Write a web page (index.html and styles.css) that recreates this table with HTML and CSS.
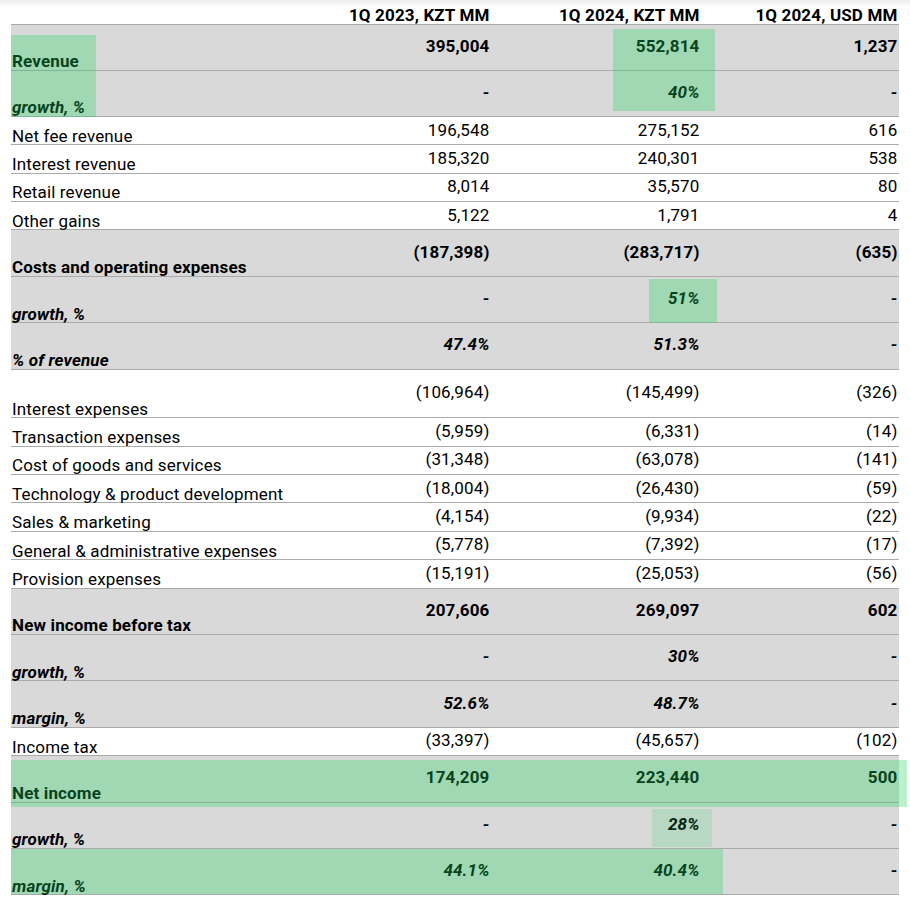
FILE: index.html
```html
<!DOCTYPE html>
<html lang="en">
<head>
<meta charset="utf-8">
<title>1Q 2024 results</title>
<link rel="stylesheet" href="styles.css">
</head>
<body>
<div class="sheet">
  <div class="row head">
    <div class="lab"></div>
    <div class="num">1Q 2023, KZT MM</div>
    <div class="num">1Q 2024, KZT MM</div>
    <div class="num">1Q 2024, USD MM</div>
  </div>

  <div class="row big gray bold first">
    <div class="lab">Revenue</div>
    <div class="num">395,004</div><div class="num">552,814</div><div class="num">1,237</div>
  </div>
  <div class="row big gray bi">
    <div class="lab">growth, %</div>
    <div class="num">-</div><div class="num">40%</div><div class="num">-</div>
  </div>
  <div class="row small">
    <div class="lab">Net fee revenue</div>
    <div class="num">196,548</div><div class="num">275,152</div><div class="num">616</div>
  </div>
  <div class="row small">
    <div class="lab">Interest revenue</div>
    <div class="num">185,320</div><div class="num">240,301</div><div class="num">538</div>
  </div>
  <div class="row small">
    <div class="lab">Retail revenue</div>
    <div class="num">8,014</div><div class="num">35,570</div><div class="num">80</div>
  </div>
  <div class="row small">
    <div class="lab">Other gains</div>
    <div class="num">5,122</div><div class="num">1,791</div><div class="num">4</div>
  </div>

  <div class="row big gray bold">
    <div class="lab">Costs and operating expenses</div>
    <div class="num">(187,398)</div><div class="num">(283,717)</div><div class="num">(635)</div>
  </div>
  <div class="row big gray bi">
    <div class="lab">growth, %</div>
    <div class="num">-</div><div class="num">51%</div><div class="num">-</div>
  </div>
  <div class="row big gray bi">
    <div class="lab">% of revenue</div>
    <div class="num">47.4%</div><div class="num">51.3%</div><div class="num">-</div>
  </div>

  <div class="row tall">
    <div class="lab">Interest expenses</div>
    <div class="num">(106,964)</div><div class="num">(145,499)</div><div class="num">(326)</div>
  </div>
  <div class="row small">
    <div class="lab">Transaction expenses</div>
    <div class="num">(5,959)</div><div class="num">(6,331)</div><div class="num">(14)</div>
  </div>
  <div class="row small">
    <div class="lab">Cost of goods and services</div>
    <div class="num">(31,348)</div><div class="num">(63,078)</div><div class="num">(141)</div>
  </div>
  <div class="row small">
    <div class="lab">Technology &amp; product development</div>
    <div class="num">(18,004)</div><div class="num">(26,430)</div><div class="num">(59)</div>
  </div>
  <div class="row small">
    <div class="lab">Sales &amp; marketing</div>
    <div class="num">(4,154)</div><div class="num">(9,934)</div><div class="num">(22)</div>
  </div>
  <div class="row small">
    <div class="lab">General &amp; administrative expenses</div>
    <div class="num">(5,778)</div><div class="num">(7,392)</div><div class="num">(17)</div>
  </div>
  <div class="row small">
    <div class="lab">Provision expenses</div>
    <div class="num">(15,191)</div><div class="num">(25,053)</div><div class="num">(56)</div>
  </div>

  <div class="row big gray bold">
    <div class="lab">New income before tax</div>
    <div class="num">207,606</div><div class="num">269,097</div><div class="num">602</div>
  </div>
  <div class="row big gray bi">
    <div class="lab">growth, %</div>
    <div class="num">-</div><div class="num">30%</div><div class="num">-</div>
  </div>
  <div class="row big gray bi">
    <div class="lab">margin, %</div>
    <div class="num">52.6%</div><div class="num">48.7%</div><div class="num">-</div>
  </div>
  <div class="row small">
    <div class="lab">Income tax</div>
    <div class="num">(33,397)</div><div class="num">(45,657)</div><div class="num">(102)</div>
  </div>

  <div class="row big gray bold">
    <div class="lab">Net income</div>
    <div class="num">174,209</div><div class="num">223,440</div><div class="num">500</div>
  </div>
  <div class="row big gray bi">
    <div class="lab">growth, %</div>
    <div class="num">-</div><div class="num">28%</div><div class="num">-</div>
  </div>
  <div class="row big gray bi">
    <div class="lab">margin, %</div>
    <div class="num">44.1%</div><div class="num">40.4%</div><div class="num">-</div>
  </div>

  <div class="hl hl-revenue-label"></div>
  <div class="hl hl-revenue-value"></div>
  <div class="hl hl-cost-growth"></div>
  <div class="hl hl-net-income"></div>
  <div class="hl hl-ni-growth"></div>
  <div class="hl hl-ni-margin"></div>
</div>
</body>
</html>
```

FILE: styles.css
```css
html, body {
  margin: 0;
  padding: 0;
  background: #fff linear-gradient(#ececec, #ffffff 7px) no-repeat;
}

body {
  font-family: Roboto, "Liberation Sans", Arial, sans-serif;
  font-size: 17px;
  letter-spacing: 0.15px;
  color: #000;
}

.sheet {
  position: relative;
  width: 910px;
  height: 904px;
  padding-left: 11px;
  box-sizing: border-box;
}

.row {
  display: grid;
  grid-template-columns: 289px 191px 210px 198px;
  width: 888px;
  box-sizing: border-box;
  border-bottom: 1px solid #aaaaaa;
  align-items: center;
}

.head {
  height: 25px;
  font-weight: 700;
  align-items: end;
}

.head .num {
  line-height: 18px;
  padding-bottom: 0;
}

.small { height: 28.4px; }
.big { height: 46.4px; }
.big.first { height: 45.5px; }
.tall { height: 48.6px; }

.gray { background: #d9d9d9; }

.bold { font-weight: 700; }
.bi { font-weight: 700; font-style: italic; }

.lab {
  align-self: end;
  line-height: 16.6px;
  padding-left: 1px;
  white-space: nowrap;
}

.num {
  text-align: right;
  padding-right: 1.5px;
  padding-bottom: 3px;
  white-space: nowrap;
  line-height: normal;
}

.small .num { padding-bottom: 2px; }

/* highlight markers drawn over the sheet */
.hl {
  position: absolute;
  background: rgba(30, 212, 92, 0.31);
  pointer-events: none;
}

.hl-revenue-label { left: 11px; top: 35px; width: 85px; height: 81.5px; }
.hl-revenue-value { left: 613px; top: 29px; width: 102px; height: 82px; }
.hl-cost-growth { left: 649px; top: 279px; width: 68px; height: 43.5px; }
.hl-net-income { left: 11px; top: 760px; width: 896px; height: 46.5px; }
.hl-ni-growth { left: 652px; top: 809px; width: 60px; height: 38px; background: rgba(30, 212, 92, 0.17); }
.hl-ni-margin { left: 11px; top: 849px; width: 712px; height: 44.5px; }
```
